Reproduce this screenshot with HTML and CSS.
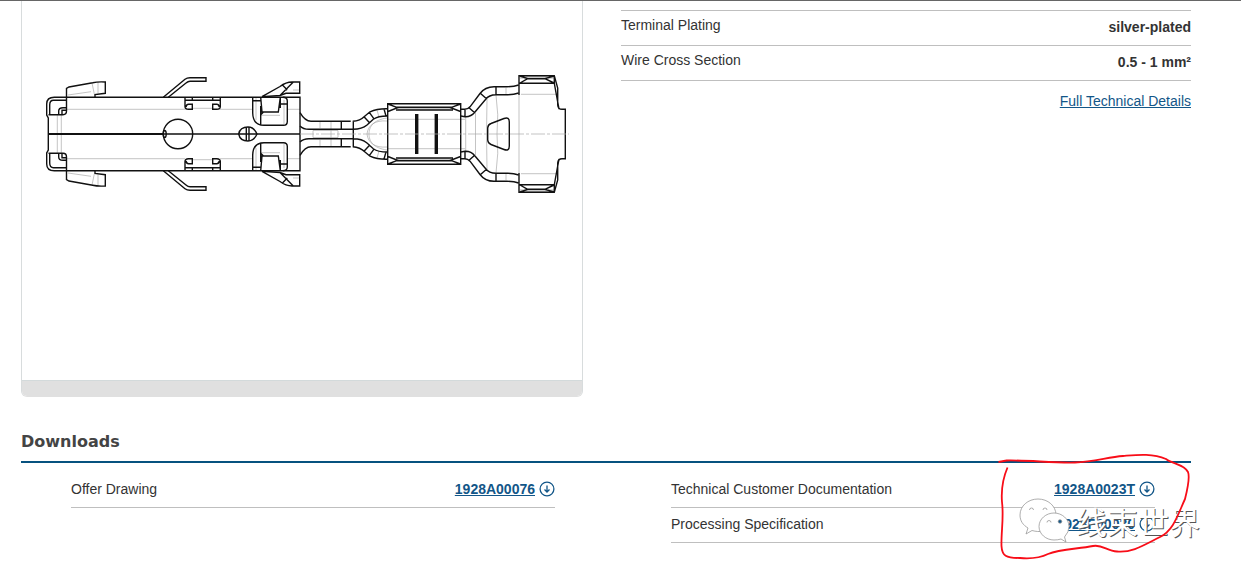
FILE: index.html
```html
<!DOCTYPE html>
<html lang="en">
<head>
<meta charset="utf-8">
<title>Terminal – Product Details</title>
<link rel="stylesheet" href="styles.css">
</head>
<body>
<svg class="sprite" aria-hidden="true">
  <symbol id="download" viewBox="0 0 16 16">
    <circle cx="8" cy="8" r="6.9" fill="none" stroke="#125688" stroke-width="1.3"/>
    <path d="M8 4.500v6.500M5.500 8.500 8 11l2.500-2.500" fill="none" stroke="#125688" stroke-width="1.300"/>
  </symbol>
</svg>
<main class="page">
  <div class="product">
    <figure class="preview">
      <svg class="drawing" viewBox="22 1 560 379" role="img" aria-label="Terminal drawing">
        <defs>
          <g id="half">
            <g class="fine">
              <path d="M67 109.3H185M220 109.3H252M288 109.3H300M57.3 115V134M61.3 115V134M68 95 91 91.7M92 83 94.3 94M98 82V93.3M193 108.3H212M256 98V120M284 100V124M261 115.3H280M293 90H299"/>
              <path d="M320 122V128M331 122V134M313 130.5H338V134M313 130.5V134M387 121C375 120 368 125 367 134M387 118C373 120 369 127 369 134M377 110 379 117M388 119.3H465M465.7 117V134M475.5 113V134M487 99 486.5 134M496 95Q499 115 497 134M506 88V94M519 95V134M521 94.3H557"/>
            </g>
            <path class="grey" d="M397 107.5H452L449 110H398ZM520 76H554V78.7H520Z"/>
            <path d="M300 134V97.3H54.3Q46.7 97.3 46.7 104V115L48.3 118V134M66.5 100.3H53.5Q49.7 100.3 49.7 105V114.5M48.5 114.7H63Q66.5 114.7 66.5 111V88.5L69 87 92.7 82.7Q98 81.5 105.3 82V93.3L95 94.5V97M66.5 107.7H63Q58.7 107.7 58.7 111V114.7M66 110.3H62V114.7"/>
            <path d="M163.3 97.3 185 79.3Q187 77.7 190 77.7H206V81.3H190Q188 81.3 186 83L168.3 97.3"/>
            <path d="M185 97.3V106.5Q185 109.3 188.5 109.3H192.3V104.3H188.5Q186.5 104.3 186 107M185 100.3H220.3M220.3 97.3V106.5Q220.3 109.3 216.8 109.3H212.7V104.3H216.8Q218.8 104.3 219.3 107M192.3 97.3V100M212.7 97.3V100"/>
            <path d="M252.7 97.3V113Q253 125.3 264 125.3H283.5Q287.3 125.3 287.3 121.5V101Q287.3 97.5 283 97.3M252.7 100.7H260.7M260.7 97.3 262 112H278.3L280.3 97.3M260.7 106V124.7M261 114.5 263.5 112M280.3 97V108M280 104H287M262 96.7 280 86.5Q286 82 292 82H299.7V93.3H286L280 95.5 262 96.7M282.7 85.3 287.3 90M293.3 82 280 95.5"/>
            <path d="M300 112.7Q305 121.3 311 121.3H350.7M352.7 121.3Q360 121 365 116L370 111.8Q377 108.5 387.3 108.7M300 126Q303 129.3 309 129.3H353Q362 129.3 367 125L373.3 119.3Q378 116 387.3 116M341.3 121.3V129.3M353.3 121.3V134M364 116.7 370 123.3M369.3 112.3 374 118.8M384 109 386 116"/>
            <path d="M387.7 134V103.8H460.7V134M396 107.3H452M396 110H453M388 104 397.5 107.7 388 111.5M460.5 104 450.7 107.7 460.5 111.5"/>
            <path d="M460.7 109.3H464.7Q468 109.3 470 106.8L480 93.5Q485 86.7 494 86.7H506.7Q514 86.7 518.7 85M460.7 116 465 116.7Q471 117 475 112L485.5 99.5Q489 94.7 496 94.7H508Q514 94.7 518.7 93M465 109.3V116.7M469.3 108 475 113M480.3 93.3 486.5 98.7M496 86.7V94.7"/>
            <path d="M519 95V75.8H554.3L557.7 88V105Q558 109.3 562 109.3H565.3V134M554.3 76V83.3L559 109M519 83.3H554M526 78.7H547M520 76 527.7 78.7 520 83M554 76 545 78.7 554 83M487.7 134V128Q488 124.5 491 123.5L504 118.5Q509.3 116.5 509.3 122V134"/>
          </g>
        </defs>
        <g class="ink">
          <use href="#half"/>
          <use href="#half" transform="matrix(1 0 0 -1 0 268)"/>
          <path class="heavy" d="M48 134H164"/>
          <path d="M164 134H300M246.3 127.5V140.5M249 127V141"/>
          <circle cx="178" cy="134" r="14.7"/>
          <ellipse cx="164.7" cy="134" rx="1.5" ry="3.5"/>
          <path d="M238.7 134Q240 127 248 127 254 127 257 134 254 141 248 141 240 141 238.7 134Z"/>
          <path class="slot" d="M416.7 114V154M436.3 114V154"/>
          <path class="fine axis" d="M300 134H569"/>
        </g>
      </svg>
      <figcaption class="preview-bar"></figcaption>
    </figure>
    <section class="specs">
      <dl class="spec-list">
        <div class="spec-row"><dt>Terminal Plating</dt><dd>silver-plated</dd></div>
        <div class="spec-row"><dt>Wire Cross Section</dt><dd>0.5 - 1 mm²</dd></div>
      </dl>
      <a class="details" href="#details">Full Technical Details</a>
    </section>
  </div>
  <section class="downloads">
    <h2>Downloads</h2>
    <div class="columns">
      <ul class="files">
        <li><span>Offer Drawing</span><a href="#offer"><span class="number">1928A00076</span><svg class="icon"><use href="#download"/></svg></a></li>
      </ul>
      <ul class="files">
        <li><span>Technical Customer Documentation</span><a href="#tcd"><span class="number">1928A0023T</span><svg class="icon"><use href="#download"/></svg></a></li>
        <li><span>Processing Specification</span><a href="#spec"><span class="number">1928F00030</span><svg class="icon"><use href="#download"/></svg></a></li>
      </ul>
    </div>
    <div class="watermark">
      <svg class="bubbles" viewBox="1018 497 52 48" aria-hidden="true">
        <path d="M1038 499C1028 499 1020 506 1020 515 1020 521 1023 525 1028 528L1026 534 1032 530.500C1048 535 1056 524 1056 515 1056 506 1048 499 1038 499Z"/>
        <path d="M1054 513C1046 513 1039 519 1039 526.500 1039 534 1046 540 1054 540Q1058 540 1061 539L1066 542 1064.500 537Q1069 532 1069 526.500C1069 519 1062 513 1054 513Z"/>
        <path class="eyes" d="M1029.500 510a2 2 0 0 1 4 0M1043 510a2 2 0 0 1 4 0M1047 522.500a2 2 0 0 1 4 0"/>
        <circle class="pupil" cx="1060" cy="521.500" r="1.800"/>
      </svg>
      <span>线束世界</span>
    </div>
    <svg class="marker" viewBox="990 446 230 120" aria-hidden="true">
      <path d="M1007.5 467.5C1003 478 1001 489 1002 502 1004 518 1001 532 1001.5 546 1002 556 1006 558 1020 558 1032 559 1042 557 1048 554 1060 549 1078 549 1093 546 1102 544 1107 551 1117 551.5 1132 553 1144 545 1160 537 1174 530 1178 514 1185 499 1188 487 1190 477 1188 472 1184 464 1172 464 1166 459 1152 453 1136 455 1123 456 1108 457 1094 462 1075 462.500 1050 463 1030 460 1006.500 460.500L998.500 462"/>
    </svg>
  </section>
</main>
</body>
</html>
```
FILE: styles.css
```css
* { box-sizing: border-box; }
body {
  margin: 0;
  background: #fff;
  color: #333;
  font: 14px/20px "Liberation Sans", Arial, sans-serif;
  overflow-x: hidden;
}
.sprite { position: absolute; width: 0; height: 0; }
.page { border-top: 1px solid #666; padding: 0 50px 24px 21px; }
.product {
  display: grid;
  grid-template-columns: 562fr 570fr;
  column-gap: 38px;
  align-items: start;
}
.preview {
  margin: 0;
  border: 1px solid #d8dcdd;
  border-top: 0;
  border-bottom-color: #e0e0e0;
  border-radius: 0 0 6px 6px;
  overflow: hidden;
}
.drawing { display: block; width: 100%; }
.preview-bar { height: 16px; background: #e0e0e0; border-top: 1px solid #d3dadb; }
.ink { fill: none; stroke: #111; stroke-width: 1.4; }
.fine { stroke: #aaa; stroke-width: 0.7; }
.grey { fill: #ccc; stroke: none; }
.heavy { stroke-width: 2.2; }
.slot { stroke-width: 3.4; }
.axis { stroke-dasharray: 14 2 3 2; }

.specs { padding-top: 9px; }
.spec-list { margin: 0; border-top: 1px solid #bfbfbf; }
.spec-row {
  display: flex;
  justify-content: space-between;
  height: 35px;
  padding: 4px 0 8px;
  border-bottom: 1px solid #bfbfbf;
}
.spec-row dd { margin: 0; align-self: flex-end; font-weight: bold; }
.details { display: block; width: fit-content; margin: 10px 0 0 auto; }
a { color: #125688; }

.downloads { position: relative; margin-top: 35px; }
h2 {
  margin: 0;
  padding-bottom: 9px;
  border-bottom: 2px solid #07527f;
  color: #444;
  font: bold 16px/20px "DejaVu Sans", Verdana, sans-serif;
}
.columns {
  display: grid;
  grid-template-columns: 1fr 1fr;
  column-gap: 116px;
  padding: 10px 36px 0 50px;
}
.files { margin: 0; padding: 0; list-style: none; }
.files li {
  display: flex;
  justify-content: space-between;
  padding: 6px 0 8px;
  border-bottom: 1px solid #bfbfbf;
}
.files a { display: flex; align-items: center; gap: 4px; font-weight: bold; text-decoration: none; }
.number { text-decoration: underline; }
.icon { width: 16px; height: 16px; }

.marker {
  position: absolute;
  top: 14px;
  right: -29px;
  width: 230px;
  height: 120px;
  fill: none;
  stroke: #f80d18;
  stroke-width: 1.8;
  pointer-events: none;
}
.watermark {
  position: absolute;
  top: 65px;
  right: -9px;
  display: flex;
  align-items: center;
  gap: 6px;
  color: #fff;
  font: 31px/46px "Noto Sans CJK SC", sans-serif;
  text-shadow: 1px 1px 0 #555;
  white-space: nowrap;
  pointer-events: none;
}
.bubbles { width: 52px; height: 48px; fill: #fff; stroke: #999; stroke-width: 0.8; }
.eyes { fill: none; }
.pupil { fill: #125688; }
```
